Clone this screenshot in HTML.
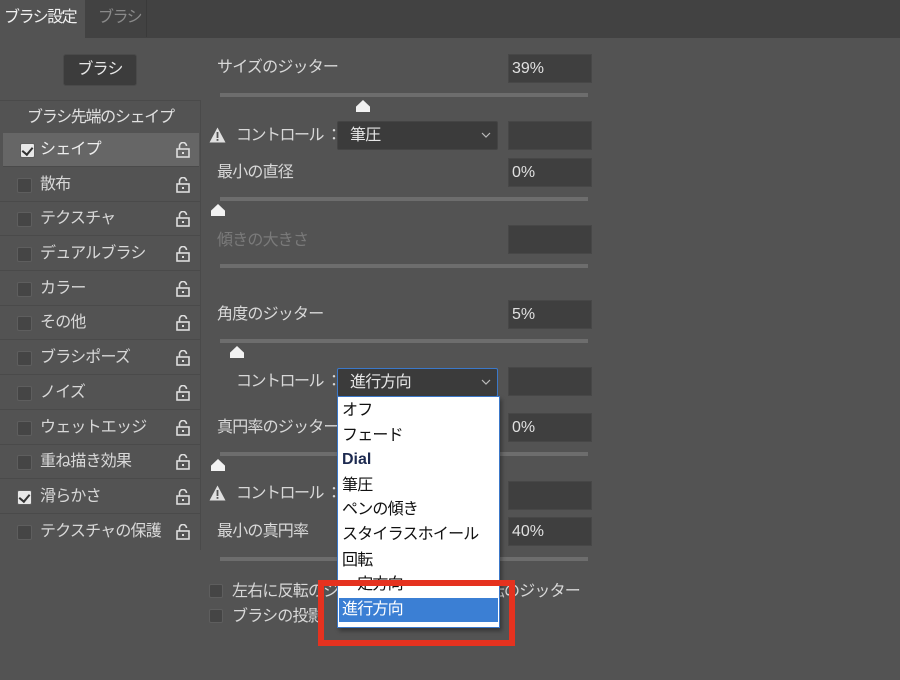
<!DOCTYPE html><html><head><meta charset="utf-8"><style>
*{margin:0;padding:0;box-sizing:border-box}
body{width:900px;height:680px;background:#535353;font-family:"Liberation Sans","Noto Sans CJK JP",sans-serif;color:#d8d8d8;font-size:16px;letter-spacing:-0.8px;position:relative;overflow:hidden;line-height:20px}
.a{position:absolute;white-space:nowrap}
.inp{position:absolute;background:#3f3f3f;border:1px solid #474747;left:508px;width:84px;height:29px;padding:4px 3px;font-size:16px;color:#e0e0e0;letter-spacing:0}
.tr{position:absolute;left:220px;width:368px;height:4px;background:#6d6d6d}
.th{position:absolute;width:14px;height:12px;background:#f2f2f2;clip-path:polygon(50% 0,100% 55%,100% 100%,0 100%,0 55%)}
.row{position:absolute;left:0;width:200px;height:34px;border-bottom:1px solid #4a4a4a}
.cb{position:absolute;left:17px;top:10px;width:15px;height:15px;background:#454545;border:1px solid #5e5e5e;border-radius:2px}
.cb.on{background:#e8e8e8}
.cb.on::after{content:"";position:absolute;left:3px;top:1px;width:5px;height:8px;border:solid #333;border-width:0 2.5px 2.5px 0;transform:rotate(40deg)}
.lb{position:absolute;left:40px;top:7px;font-size:16px}
.lk{position:absolute;left:176px;top:9px;width:14px;height:16px}
.warn{position:absolute;width:17px;height:16px}
.dd{position:absolute;left:337px;width:161px;height:29px;background:#3b3b3b;border:1px solid #444;border-radius:2px;padding:4px 12px;font-size:16px;color:#e6e6e6}
.dd svg{position:absolute;right:6px;top:10px}
.it{position:absolute;left:4px;font-size:16px;color:#111;line-height:20px}
</style></head><body>
<svg width="0" height="0" style="position:absolute"><defs>
<g id="lock"><rect x="1" y="7" width="12" height="8" fill="none" stroke="#ddd" stroke-width="1.6"/><path d="M3.5 7V4a3.5 3.5 0 0 1 7 0" fill="none" stroke="#ddd" stroke-width="1.6"/><rect x="6" y="10" width="2" height="2" fill="#ddd"/></g>
<g id="wn"><path d="M8.5 0.5L16.5 15.5H0.5Z" fill="#e0e0e0"/><rect x="7.6" y="5" width="1.8" height="6" fill="#535353"/><rect x="7.6" y="12" width="1.8" height="1.8" fill="#535353"/></g>
<path id="chev" d="M1 1L5 5L9 1" fill="none" stroke="#bbb" stroke-width="1.2"/>
</defs></svg>
<div class="a" style="left:0;top:0;width:900px;height:38px;background:#424242"></div>
<div class="a" style="left:0;top:0;width:85px;height:38px;background:#535353;padding:8px 0 0 4px;color:#f0f0f0;letter-spacing:-1.5px">ブラシ設定</div>
<div class="a" style="left:85px;top:0;width:62px;height:37px;border-right:1px solid #3a3a3a;padding:8px 0 0 13px;color:#8a8a8a;letter-spacing:-1.5px">ブラシ</div>
<div class="a" style="left:63px;top:54px;width:74px;height:32px;background:#3c3c3c;border:1px solid #4a4a4a;border-radius:3px;text-align:center;padding-top:5px;color:#e6e6e6">ブラシ</div>
<div class="a" style="left:0;top:100px;width:201px;height:450px;border-right:1px solid #4a4a4a;border-top:1px solid #4a4a4a"></div>
<div class="a" style="left:27px;top:108px;color:#e0e0e0;letter-spacing:-1.3px">ブラシ先端のシェイプ</div>
<div class="row" style="top:133px;background:#666;left:3px;width:196px"><div class="cb on"></div><div class="lb" style="color:#eee;left:37px">シェイプ</div><svg class="lk" viewBox="0 0 14 16" style="left:173px"><use href="#lock"/></svg></div>
<div class="row" style="top:168px"><div class="cb"></div><div class="lb">散布</div><svg class="lk" viewBox="0 0 14 16"><use href="#lock"/></svg></div>
<div class="row" style="top:202px"><div class="cb"></div><div class="lb">テクスチャ</div><svg class="lk" viewBox="0 0 14 16"><use href="#lock"/></svg></div>
<div class="row" style="top:237px"><div class="cb"></div><div class="lb">デュアルブラシ</div><svg class="lk" viewBox="0 0 14 16"><use href="#lock"/></svg></div>
<div class="row" style="top:272px"><div class="cb"></div><div class="lb">カラー</div><svg class="lk" viewBox="0 0 14 16"><use href="#lock"/></svg></div>
<div class="row" style="top:306px"><div class="cb"></div><div class="lb">その他</div><svg class="lk" viewBox="0 0 14 16"><use href="#lock"/></svg></div>
<div class="row" style="top:341px"><div class="cb"></div><div class="lb">ブラシポーズ</div><svg class="lk" viewBox="0 0 14 16"><use href="#lock"/></svg></div>
<div class="row" style="top:376px"><div class="cb"></div><div class="lb">ノイズ</div><svg class="lk" viewBox="0 0 14 16"><use href="#lock"/></svg></div>
<div class="row" style="top:411px"><div class="cb"></div><div class="lb">ウェットエッジ</div><svg class="lk" viewBox="0 0 14 16"><use href="#lock"/></svg></div>
<div class="row" style="top:445px"><div class="cb"></div><div class="lb">重ね描き効果</div><svg class="lk" viewBox="0 0 14 16"><use href="#lock"/></svg></div>
<div class="row" style="top:480px"><div class="cb on"></div><div class="lb">滑らかさ</div><svg class="lk" viewBox="0 0 14 16"><use href="#lock"/></svg></div>
<div class="row" style="top:515px;border:none"><div class="cb"></div><div class="lb">テクスチャの保護</div><svg class="lk" viewBox="0 0 14 16"><use href="#lock"/></svg></div>

<div class="a" style="left:217px;top:58px">サイズのジッター</div>
<div class="inp" style="top:54px">39%</div>
<div class="tr" style="top:93px"></div><div class="th" style="left:356px;top:100px"></div>
<svg class="warn" style="left:209px;top:127px" viewBox="0 0 17 16"><use href="#wn"/></svg>
<div class="a" style="left:236px;top:126px;letter-spacing:-1.5px">コントロール ：</div>
<div class="dd" style="top:121px">筆圧<svg width="10" height="6"><use href="#chev"/></svg></div>
<div class="inp" style="top:121px"></div>
<div class="a" style="left:217px;top:163px">最小の直径</div>
<div class="inp" style="top:158px">0%</div>
<div class="tr" style="top:197px"></div><div class="th" style="left:211px;top:204px"></div>
<div class="a" style="left:217px;top:231px;color:#7a7a7a">傾きの大きさ</div>
<div class="inp" style="top:225px"></div>
<div class="tr" style="top:264px"></div>
<div class="a" style="left:217px;top:305px">角度のジッター</div>
<div class="inp" style="top:300px">5%</div>
<div class="tr" style="top:339px"></div><div class="th" style="left:230px;top:346px"></div>
<div class="a" style="left:236px;top:372px;letter-spacing:-1.5px">コントロール ：</div>
<div class="dd" style="top:368px;border-color:#3b78c9">進行方向<svg width="10" height="6"><use href="#chev"/></svg></div>
<div class="inp" style="top:367px"></div>
<div class="a" style="left:217px;top:418px">真円率のジッター</div>
<div class="inp" style="top:413px">0%</div>
<div class="tr" style="top:452px"></div><div class="th" style="left:211px;top:459px"></div>
<svg class="warn" style="left:209px;top:485px" viewBox="0 0 17 16"><use href="#wn"/></svg>
<div class="a" style="left:236px;top:484px;letter-spacing:-1.5px">コントロール ：</div>
<div class="inp" style="top:481px"></div>
<div class="a" style="left:217px;top:522px">最小の真円率</div>
<div class="inp" style="top:517px">40%</div>
<div class="tr" style="top:557px"></div>
<div class="a" style="left:209px;top:584px;width:14px;height:14px;background:#454545;border:1px solid #5e5e5e;border-radius:2px"></div>
<div class="a" style="left:232px;top:582px">左右に反転のジッター</div>
<div class="a" style="right:320px;top:582px">回転のジッター</div>
<div class="a" style="left:209px;top:609px;width:14px;height:14px;background:#454545;border:1px solid #5e5e5e;border-radius:2px"></div>
<div class="a" style="left:232px;top:607px">ブラシの投影</div>

<div class="a" style="left:337px;top:396px;width:163px;height:232px;background:#fff;border:1px solid #3b78c9;box-shadow:2px 3px 4px rgba(0,0,0,.35)">
<div class="it" style="top:4px">オフ</div>
<div class="it" style="top:29px">フェード</div>
<div class="it" style="top:53px;color:#1d2a50;font-weight:bold;letter-spacing:0">Dial</div>
<div class="it" style="top:79px">筆圧</div>
<div class="it" style="top:103px">ペンの傾き</div>
<div class="it" style="top:128px">スタイラスホイール</div>
<div class="it" style="top:154px">回転</div>
<div class="it" style="top:178px">一定方向</div>
<div class="a" style="left:1px;top:201px;width:159px;height:24px;background:#3b7fd4;color:#fff;padding:2px 3px">進行方向</div>
</div>
<div class="a" style="left:318px;top:580px;width:197px;height:66px;border:6px solid #e5321f"></div>
</body></html>
